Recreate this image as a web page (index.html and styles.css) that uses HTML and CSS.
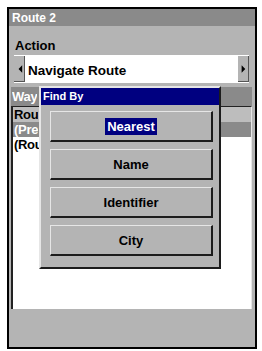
FILE: index.html
```html
<!DOCTYPE html>
<html lang="en">
<head>
    <meta charset="UTF-8">
    <meta name="viewport" content="width=device-width, initial-scale=1.0">
    <link rel="stylesheet" href="styles.css">
    <title>Route 2</title>
</head>
<body>
    <div class="screen">
        <div class="title">Route 2</div>

        <div class="label">Action</div>

        <!-- Selector de acción -->
        <div class="select">
            <span class="arrow">
                <svg width="11" height="26" viewBox="0 0 11 26"><polygon points="5,13 9,9 9,17" fill="#000"/></svg>
            </span>
            <span class="value">Navigate Route</span>
            <span class="arrow">
                <svg width="11" height="26" viewBox="0 0 11 26"><polygon points="8,13 4,9 4,17" fill="#000"/></svg>
            </span>
        </div>

        <!-- Lista de waypoints (solo se ve la parte que deja el diálogo) -->
        <div class="list">
            <div class="list-head"><span class="cell">Way</span></div>
            <div class="list-body">
                <div class="row"><span class="cell">Rou</span></div>
                <div class="row selected"><span class="cell">(Pre</span></div>
                <div class="row plain"><span class="cell">(Rou</span></div>
            </div>
        </div>

        <!-- Diálogo Find By -->
        <div class="dialog">
            <div class="dialog-title">Find By</div>
            <div class="dialog-body">
                <button class="btn"><span class="focus">Nearest</span></button>
                <button class="btn">Name</button>
                <button class="btn">Identifier</button>
                <button class="btn">City</button>
            </div>
        </div>
    </div>
</body>
</html>
```

FILE: styles.css
```css
body {
    margin: 0;
    background-color: #fff;
    font-family: 'Liberation Sans', Arial, sans-serif;
    font-weight: bold;
}

.screen {
    position: relative;
    width: 246px;
    height: 338px;
    margin: 7px 0 0 7px;
    border: 2px solid #000;
    background-color: #b4b4b4;
}

.title {
    box-sizing: border-box;
    height: 17px;
    padding: 2px 3px 0;
    line-height: 15px;
    font-size: 12px;
    color: #fff;
    background-color: #8a8a8a;
}

.label {
    box-sizing: border-box;
    height: 29px;
    padding: 12px 0 0 6px;
    line-height: 15px;
    font-size: 13px;
    color: #000;
}

.select {
    box-sizing: border-box;
    display: flex;
    align-items: center;
    width: 235px;
    height: 28px;
    margin-left: 5px;
    padding: 1px 0;
    background-color: #fff;
}

.arrow {
    box-sizing: border-box;
    display: flex;
    width: 11px;
    height: 26px;
    background-color: #b4b4b4;
    border-right: 1px solid #555;
    border-bottom: 1px solid #555;
}

.value {
    flex: 1;
    padding: 2px 0 0 3px;
    font-size: 13.5px;
    color: #000;
}

.list {
    width: 241px;
    height: 222px;
    margin: 4px 0 0 2px;
}

.list-head {
    height: 19px;
    padding-left: 1px;
    line-height: 19px;
    font-size: 13px;
    color: #fff;
    background-color: #8a8a8a;
}

.list-body {
    box-sizing: border-box;
    height: 203px;
    border-top: 1px solid #222;
    border-left: 2px solid #222;
    border-right: 1px solid #e6e6e6;
    background-color: #fff;
}

.row {
    height: 15px;
    padding-left: 1px;
    line-height: 15px;
    font-size: 13px;
    color: #000;
    background-color: #bdbdbd;
}

.cell {
    display: inline-block;
    max-width: 26px;
    overflow: hidden;
    white-space: nowrap;
    vertical-align: top;
    letter-spacing: -0.3px;
}

.row.selected {
    color: #fff;
    background-color: #8a8a8a;
}

.row.plain {
    background-color: #fff;
}

/* Ventana emergente */
.dialog {
    position: absolute;
    top: 77px;
    left: 30px;
    width: 178px;
    border: 2px solid;
    border-color: #e6e6e6 #1c1c1c #1c1c1c #e6e6e6;
    background-color: #b4b4b4;
}

.dialog-title {
    height: 17px;
    padding-left: 2px;
    line-height: 17px;
    font-size: 11px;
    color: #fff;
    background-color: #000080;
}

.dialog-body {
    display: flex;
    flex-direction: column;
    gap: 7px;
    padding: 6px 6px 11px 9px;
}

.btn {
    box-sizing: border-box;
    height: 31px;
    padding: 0;
    border: 1px solid;
    border-width: 1px 2px 2px 1px;
    border-color: #e6e6e6 #1c1c1c #1c1c1c #e6e6e6;
    background-color: #b4b4b4;
    font-family: 'Liberation Sans', Arial, sans-serif;
    font-weight: bold;
    font-size: 13px;
    color: #000;
}

.focus {
    padding: 1px 2px;
    color: #fff;
    background-color: #000080;
}
```
